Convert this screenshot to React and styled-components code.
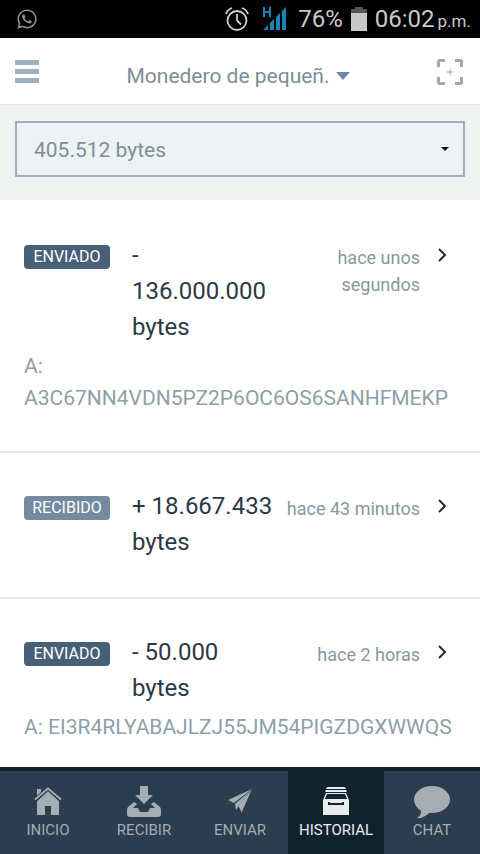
import React from "react"
import styled, { createGlobalStyle } from "styled-components"
import { FaWhatsapp } from "react-icons/fa"

const GlobalStyle = createGlobalStyle`
    * {
        box-sizing: border-box;
    }
    body {
        margin: 0;
        background: #fff;
        font-family: Roboto, "Liberation Sans", sans-serif;
    }
    button, select {
        font-family: inherit;
    }
`

const transactions = [
    { id: 1, type: "sent", amount: "- 136.000.000 bytes", time: "hace unos segundos", address: "A3C67NN4VDN5PZ2P6OC6OS6SANHFMEKP" },
    { id: 2, type: "received", amount: "+ 18.667.433 bytes", time: "hace 43 minutos" },
    { id: 3, type: "sent", amount: "- 50.000 bytes", time: "hace 2 horas", address: "EI3R4RLYABAJLZJ55JM54PIGZDGXWWQS" },
]

const tabs = [
    { label: "INICIO", Icon: HomeIcon },
    { label: "RECIBIR", Icon: ReceiveIcon },
    { label: "ENVIAR", Icon: SendIcon },
    { label: "HISTORIAL", Icon: HistoryIcon, active: true },
    { label: "CHAT", Icon: ChatIcon },
]

function AlarmIcon() {
    return (
        <svg width="26" height="26" viewBox="0 0 26 26" fill="none" stroke="#cfcfcf" strokeWidth="1.8">
            <circle cx="13" cy="14.500" r="9.500" />
            <path d="M13 8v6.500l4 4" />
            <path d="M2 8c1-3 3-5 6-6M18 2c3 1 5 3 6 6" />
        </svg>
    )
}

function SignalIcon() {
    return (
        <svg width="26" height="26" viewBox="0 0 26 26" fill="#1b83b8">
            <path d="M1 1h2v4h4V1h2v10H7V7H3v4H1z" />
            <path d="M1 24l5-5v5zM8 17l4-4v11H8zM14 11l4-4v17h-4zM20 5l4-4v23h-4z" />
        </svg>
    )
}

function BatteryIcon() {
    return (
        <svg width="16" height="24" viewBox="0 0 16 24">
            <path d="M4 0h8v2h4v5H0V2h4z" fill="#555" />
            <path d="M0 6h16v18H0z" fill="#c6c6c6" />
        </svg>
    )
}

function MenuIcon() {
    return (
        <svg width="24" height="24" viewBox="0 0 24 24" fill="#9fb0bf">
            <path d="M0 0h24v5H0zM0 9h24v5H0zM0 18h24v5H0z" />
        </svg>
    )
}

function ScanIcon() {
    return (
        <svg width="26" height="26" viewBox="0 0 26 26" fill="none" stroke="#9aa9ac">
            <path d="M1.500 8V3q0-1.500 1.500-1.500h5M18 1.500h5q1.500 0 1.500 1.500v5M24.500 18v5q0 1.500-1.500 1.500h-5M8 24.500H3q-1.500 0-1.500-1.500v-5" strokeWidth="3" />
            <path d="M13 10v6M10 13h6" strokeWidth="1" />
        </svg>
    )
}

function HomeIcon() {
    return (
        <svg width="28" height="28" viewBox="0 0 28 28" fill="currentColor">
            <path d="M3 2h4v5l-4 4z" />
            <path d="M14 4l11 10v14h-8v-9h-6v9H3V14z" />
            <path d="M1 13L14 1.500l13 11.500" fill="none" stroke="#2b3d4f" strokeWidth="4" />
            <path d="M1 12.500L14 1.500l13 11" fill="none" stroke="currentColor" strokeWidth="1.800" />
        </svg>
    )
}

function ReceiveIcon() {
    return (
        <svg width="36" height="32" viewBox="0 0 36 32" fill="currentColor">
            <path d="M14 1h8v9h5l-9 9-9-9h5z" />
            <path d="M8 17l3 2-4 4h5l2 4h8l2-4h5l-4-4 3-2 6 5q1 1 1 3v4q0 3-3 3H4q-3 0-3-3v-4q0-2 1-3z" />
        </svg>
    )
}

function SendIcon() {
    return (
        <svg width="26" height="26" viewBox="0 0 26 26" fill="currentColor">
            <path d="M25 1L1 12l6 3z" />
            <path d="M23 3L8 16l1 6 3-4z" />
            <path d="M25 1L11.500 18l3 6.500z" />
        </svg>
    )
}

function HistoryIcon() {
    return (
        <svg width="28" height="29" viewBox="0 0 28 29">
            <path d="M5 0h18l1 2H4zM4 3h20l1 2H3z" fill="#e8ecef" />
            <path d="M4 6h20l3 7v15H1V13z" fill="#e8ecef" />
            <path d="M5 7h18l2 5H3z" fill="#11222f" />
            <path d="M6 15h2v1h12v-1h2v3H6z" fill="#11222f" />
        </svg>
    )
}

function ChatIcon() {
    return (
        <svg width="38" height="36" viewBox="0 0 38 36" fill="currentColor">
            <path d="M19 3c10 0 18 6 18 13.500S29 30 19 30h-3c-3 3-8 6-12 5 3-2 4-4 4-7-4-3-7-7-7-11.500C1 9 9 3 19 3z" />
        </svg>
    )
}

function Transaction({ tx }) {
    const sent = tx.type === "sent"
    return (
        <Row>
            <Summary>
                <Badge $sent={sent}>{sent ? "ENVIADO" : "RECIBIDO"}</Badge>
                <Amount>{tx.amount}</Amount>
                <Time>{tx.time}</Time>
                <DetailButton aria-label="Ver detalle">
                    <svg width="10" height="14" viewBox="0 0 10 14" fill="none" stroke="#222c38" strokeWidth="2">
                        <path d="M2 1l6 6-6 6" />
                    </svg>
                </DetailButton>
            </Summary>
            {tx.address && <Address>A: {tx.address}</Address>}
        </Row>
    )
}

export default function App() {
    return (
        <Screen>
            <GlobalStyle />
            <StatusBar>
                <FaWhatsapp size={22} color="#8d8d8d" />
                <StatusGroup>
                    <StatusIcons>
                        <AlarmIcon />
                        <SignalIcon />
                    </StatusIcons>
                    <span>76%</span>
                    <BatteryIcon />
                    <Clock>
                        <span>06:02</span>
                        <small>p.m.</small>
                    </Clock>
                </StatusGroup>
            </StatusBar>
            <Header>
                <IconButton aria-label="Menú"><MenuIcon /></IconButton>
                <WalletButton>
                    Monedero de pequeñ.
                    <svg width="14" height="8" viewBox="0 0 14 8" fill="#6f88a3"><path d="M0 0h14L7 8z" /></svg>
                </WalletButton>
                <IconButton aria-label="Escanear"><ScanIcon /></IconButton>
            </Header>
            <BalanceBar>
                <SelectBox>
                    <select aria-label="Saldo" defaultValue="bytes">
                        <option value="bytes">405.512 bytes</option>
                    </select>
                    <svg width="8" height="4" viewBox="0 0 8 4" fill="#111"><path d="M0 0h8L4 4z" /></svg>
                </SelectBox>
            </BalanceBar>
            <List>
                {transactions.map(tx => <Transaction key={tx.id} tx={tx} />)}
            </List>
            <TabBar>
                {tabs.map(({ label, Icon, active }) => (
                    <Tab key={label} $active={active} aria-current={active ? "page" : undefined}>
                        <TabIcon><Icon /></TabIcon>
                        {label}
                    </Tab>
                ))}
            </TabBar>
        </Screen>
    )
}

const Screen = styled.div`
    display: flex;
    flex-direction: column;
    height: 100vh;
`

const StatusBar = styled.div`
    display: flex;
    flex-shrink: 0;
    align-items: center;
    justify-content: space-between;
    height: 38px;
    padding: 0 9px 0 16px;
    background: #000;
    color: #c9c9c9;
    font-size: 24px;
`

const StatusGroup = styled.div`
    display: flex;
    align-items: center;
    gap: 8px;
`

const StatusIcons = styled.div`
    display: flex;
    gap: 12px;
    margin-right: 2px;
`

const Clock = styled.time`
    display: flex;
    align-items: baseline;
    gap: 3px;

    small {
        font-size: 17px;
    }
`

const Header = styled.header`
    display: flex;
    flex-shrink: 0;
    align-items: center;
    justify-content: space-between;
    height: 67px;
    padding: 2px 17px 0 15px;
    border-bottom: 1px solid #e3e8e8;
    background: #fff;
`

const IconButton = styled.button`
    display: flex;
    padding: 0;
    border: 0;
    background: none;
`

const WalletButton = styled.button`
    display: flex;
    align-items: center;
    gap: 6px;
    padding: 8px 0 0;
    border: 0;
    background: none;
    color: #7b8d97;
    font-size: 21px;
`

const BalanceBar = styled.div`
    flex-shrink: 0;
    padding: 16px 15px 23px;
    background: #eef2f2;
`

const SelectBox = styled.div`
    display: grid;
    align-items: center;

    select {
        grid-area: 1 / 1;
        width: 100%;
        height: 56px;
        padding: 2px 17px 0;
        border: 2px solid #9cafba;
        border-radius: 0;
        background: #eef2f4;
        color: #7b8f9a;
        font-size: 21px;
        appearance: none;
    }
    svg {
        grid-area: 1 / 1;
        justify-self: end;
        margin-right: 16px;
        pointer-events: none;
    }
`

const List = styled.ul`
    flex: 1;
    min-height: 0;
    margin: 0;
    padding: 2px 0 0;
    overflow-y: auto;
    scrollbar-width: none;
    list-style: none;
`

const Row = styled.li`
    padding: 35px 16px 37px 24px;
    border-bottom: 2px solid #e6e8ea;
`

const Summary = styled.div`
    display: grid;
    grid-template-columns: 108px 142px 1fr 44px;
    align-items: start;
`

const Badge = styled.span`
    width: 86px;
    margin-top: 8px;
    border-radius: 4px;
    background: ${props => props.$sent ? "#485f78" : "#738a9f"};
    color: #fff;
    font-size: 16px;
    line-height: 24px;
    text-align: center;
`

const Amount = styled.div`
    color: #2b3947;
    font-size: 24px;
    line-height: 36px;
`

const Time = styled.div`
    margin-top: 7px;
    color: #8798a1;
    font-size: 18px;
    line-height: 27px;
    text-align: right;
`

const DetailButton = styled.button`
    display: flex;
    justify-content: center;
    margin-top: 11px;
    padding: 0;
    border: 0;
    background: none;
`

const Address = styled.div`
    margin-top: 5px;
    color: #8d9fa8;
    font-size: 21px;
    line-height: 32px;
`

const TabBar = styled.nav`
    display: grid;
    grid-template-columns: repeat(5, 1fr);
    flex-shrink: 0;
    height: 87px;
    border-top: 4px solid #11222f;
    background: #2b3d4f;
`

const Tab = styled.button`
    display: flex;
    flex-direction: column;
    align-items: center;
    padding: 12px 0 0;
    border: 0;
    background: ${props => props.$active ? "#11222f" : "transparent"};
    color: ${props => props.$active ? "#e8ecef" : "#a3adb3"};
    font-size: 15px;
    line-height: 22px;
`

const TabIcon = styled.span`
    display: flex;
    align-items: center;
    height: 36px;
`
